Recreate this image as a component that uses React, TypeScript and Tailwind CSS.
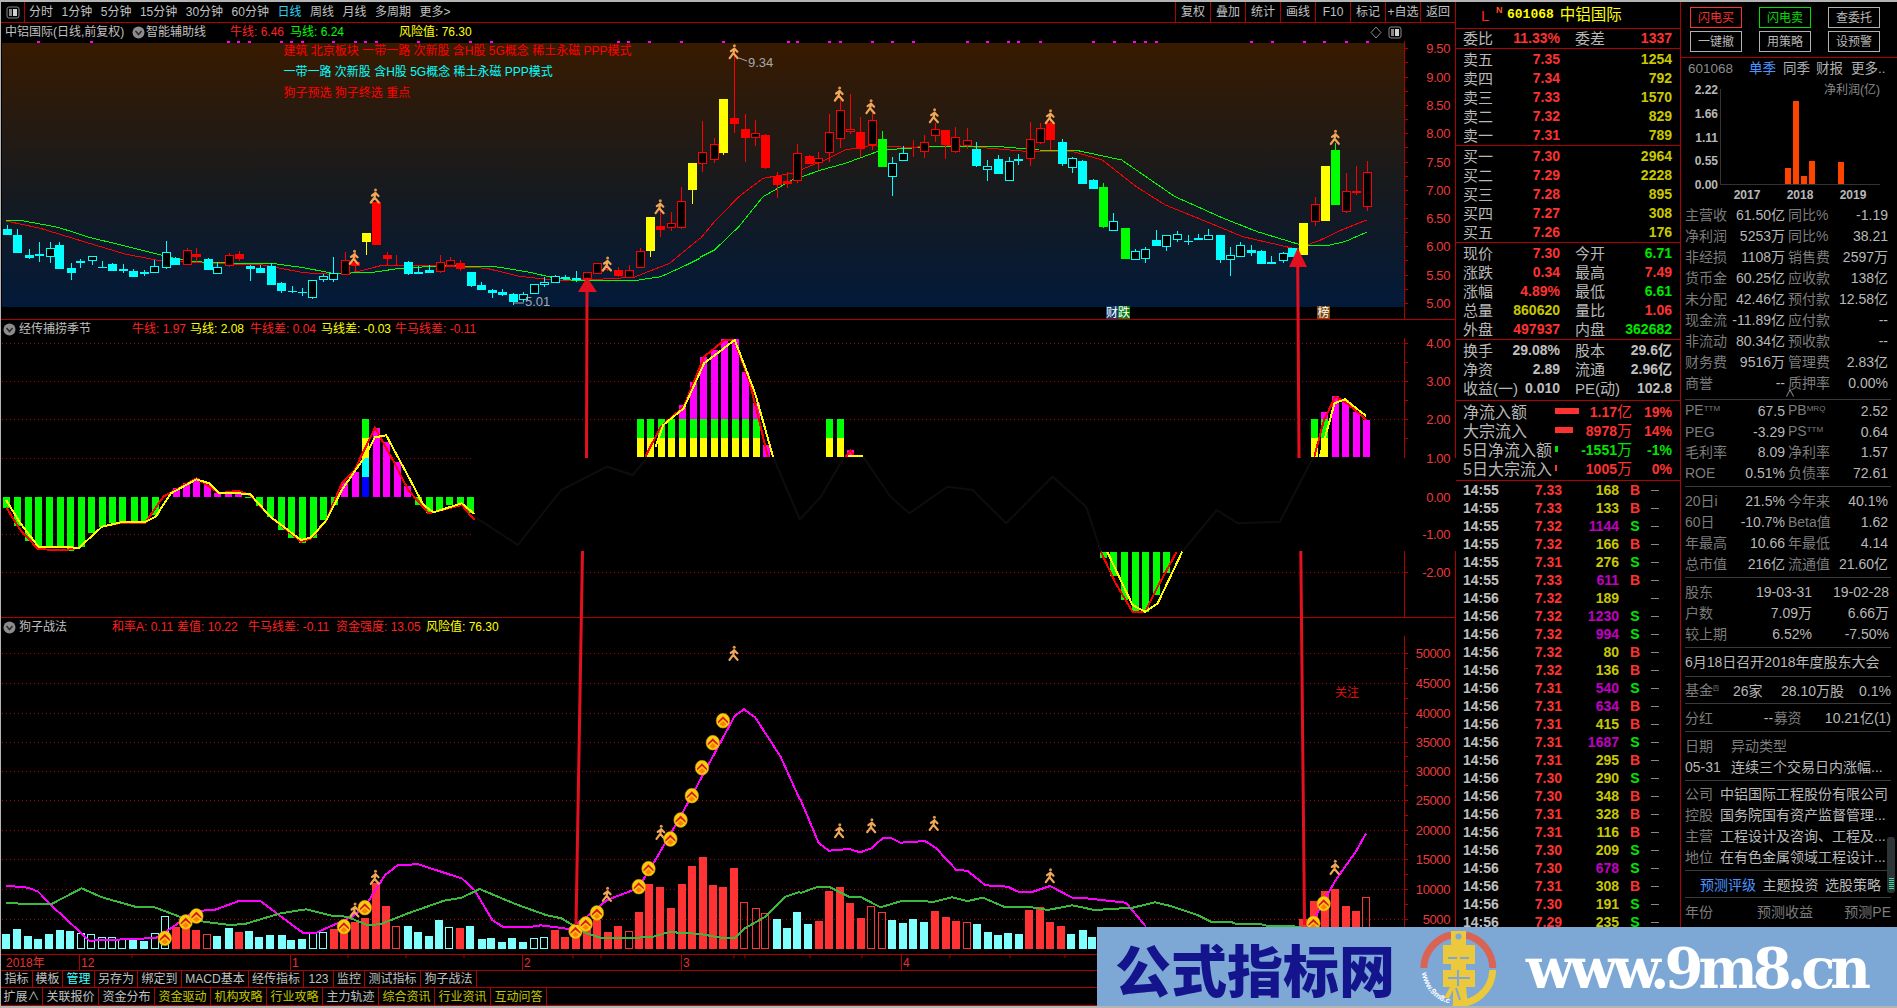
import React from 'react'

type Pt = number[]
const poly = (a: Pt[], sx: number, ox: number, oy: number) =>
  a.map(([x, y]) => `${(x / sx + ox).toFixed(1)},${(y / 3 + oy).toFixed(1)}`).join(' ')

// candles: kind, x, wick top, body top, body bottom, wick bottom (crop coordinates)
type Candle = [string, number, number, number, number, number]
const candlesA: Candle[] = [
  ['c',16,675,687,705,705],['c',39,687,705,758,758],['c',64,747,765,775,778],['c',87,725,762,767,785],['C',111,725,745,767,790],
  ['c',133,725,735,806,806],['c',158,790,804,818,840],['c',180,778,783,788,803],['C',205,769,769,781,795],['c',228,783,800,802,803],
  ['c',252,790,792,812,812],['c',275,793,806,812,820],['c',299,808,813,830,830],['c',322,810,816,821,828],['C',346,780,799,815,815],
  ['C',371,724,757,800,808],['c',393,770,775,795,795],['R',418,745,751,793,795],['r',440,743,762,771,790],['c',465,773,778,809,809],
  ['C',487,787,801,820,820],['R',512,760,766,796,800],['r',535,753,762,777,782],['c',559,795,798,806,842],['c',582,795,805,818,818],
  ['c',606,790,798,855,855],['c',630,845,849,873,878],['c',653,858,873,875,880],['c',677,865,875,878,887],['C',700,840,841,890,896],
  ['C',724,822,828,838,845],['C',747,771,820,838,845],['R',772,755,781,823,825],['r',795,755,785,797,812],['y',819,699,699,725,765],
  ['r',842,605,605,735,735],['r',866,757,765,777,797],['r',888,765,795,797,797],['c',913,782,786,822,826],['c',937,798,816,821,821],
  ['c',960,795,809,818,818],['R',985,765,787,812,818],['R',1007,770,781,796,798],['r',1031,780,790,806,812],['c',1054,816,816,858,860],
  ['c',1078,846,855,870,870],['c',1101,868,870,878,895],['c',1125,868,877,885,888],['c',1148,880,882,905,915],['C',1172,877,883,896,905],
  ['C',1197,853,853,880,880],['C',1219,832,845,853,860],['C',1244,825,829,845,850],['c',1266,826,831,837,840],['c',1290,813,834,841,845],
  ['R',1314,815,815,833,833],['R',1338,790,790,820,822],['r',1360,800,806,811,813],['r',1385,802,810,827,830],['R',1408,795,809,830,835],
  ['R',1433,745,754,800,805],['y',1455,650,650,752,770],['r',1479,625,678,690,710],['R',1503,637,670,682,692],['R',1526,560,604,680,686],
  ['y',1551,490,490,570,612],
]
const candlesB: Candle[] = [
  ['R',5,363,455,490,515],['R',28,413,433,478,490],['y',48,297,297,458,465],['r',71,145,354,371,400],['r',92,342,388,413,485],
  ['R',114,360,398,412,438],['r',135,403,405,503,507],['r',158,515,528,555,595],['r',180,515,543,552,565],['R',201,432,460,541,548],
  ['r',224,465,468,491,493],['R',244,455,473,487,510],['R',266,343,397,457,485],['R',288,300,331,415,445],['R',310,282,388,394,402],
  ['r',331,350,397,448,470],['R',354,340,361,433,450],['g',375,393,417,500,500],['C',397,472,490,529,588],['C',418,438,460,479,482],
  ['r',440,420,440,443,472],['R',463,405,425,452,473],['R',484,370,388,406,425],['r',506,390,390,435,477],['R',527,380,412,452,460],
  ['R',550,385,421,435,447],['c',570,427,447,497,500],['C',592,480,497,508,543],['c',614,465,477,522,522],['C',637,472,482,539,539],
  ['c',657,463,477,482,495],['R',680,365,416,475,497],['R',702,370,385,425,433],['r',723,340,370,420,450],['c',746,418,426,492,497],
  ['C',767,470,475,500,518],['c',789,480,483,551,551],['c',810,537,540,567,567],['g',832,548,561,681,683],['C',853,640,664,689,689],
  ['g',876,684,684,776,776],['C',897,748,754,776,780],['C',919,742,748,773,790],['c',940,690,721,738,738],['C',962,705,706,737,752],
  ['C',985,693,703,716,725],['c',1006,705,723,726,735],['c',1028,703,714,720,720],['C',1049,687,704,716,716],['c',1072,706,706,779,790],
  ['C',1093,740,766,776,828],['C',1115,725,736,767,767],['c',1136,735,751,760,767],['c',1158,750,753,791,791],['c',1179,768,787,791,791],
  ['C',1202,755,760,779,790],['c',1222,745,745,770,770],['y',1245,669,669,765,765],['R',1268,590,613,662,678],['y',1289,498,498,663,663],
  ['g',1311,430,450,615,615],['R',1332,518,574,632,640],['R',1354,497,574,576,585],['R',1375,483,517,617,633],
]
const candleColor: Record<string, string> = { c: '#00ffff', C: '#00ffff', r: '#ff0000', R: '#ff0000', y: '#ffff00', g: '#00ff00' }

function Candles({ data, sx, ox }: { data: Candle[]; sx: number; ox: number }) {
  return (
    <>
      {data.map(([k, x, wt, t, b, wb], i) => {
        const cx = Math.round(x / sx + ox)
        const col = candleColor[k]
        const hollow = k === 'C' || k === 'R'
        const top = Math.round(t / 3)
        const h = Math.max(Math.round(b / 3) - top, 1)
        return (
          <g key={i} shapeRendering="crispEdges">
            <line x1={cx + 0.5} x2={cx + 0.5} y1={wt / 3} y2={wb / 3} stroke={col} />
            <rect x={cx - 4 + (hollow ? 0.5 : 0)} y={top + (hollow ? 0.5 : 0)} width={hollow ? 8 : 9} height={h} fill={hollow ? '#000' : col} stroke={hollow ? col : 'none'} />
          </g>
        )
      })}
    </>
  )
}

function Runner({ x, y }: { x: number; y: number }) {
  return (
    <g transform={`translate(${x.toFixed(1)} ${y.toFixed(1)})`} fill="none" stroke="#f0a858" strokeWidth="2.2" strokeLinecap="round" strokeLinejoin="round">
      <circle cx="0.5" cy="-6" r="1.5" fill="#e09848" stroke="none" />
      <path d="M0.5 -3.2 L-0.5 1.5 L-4.2 6.5 M-0.5 1.5 L3.8 6.5 M-3 -0.5 L0.5 -3 L3.5 0" />
    </g>
  )
}

function Coin({ x, y }: { x: number; y: number }) {
  return (
    <g transform={`translate(${x.toFixed(1)} ${y.toFixed(1)})`}>
      <ellipse rx="6.8" ry="7.4" fill="#f8cc10" stroke="#c88a00" strokeWidth="0.5" />
      <path d="M-5 0.8 L0 -4.5 L5 0.8 L5 2.8 L0 -1.6 L-5 2.8 Z" fill="#d81818" />
      <path d="M-3.4 3.6 L0 0.2 L3.4 3.6 L0 6 Z" fill="#ff8000" />
    </g>
  )
}

function Grid({ ys, x2 = 1404 }: { ys: number[]; x2?: number }) {
  return (
    <g stroke="#b00000" strokeDasharray="1 3" shapeRendering="crispEdges">
      {ys.map(y => <line key={y} x1={2} x2={x2} y1={y + 0.5} y2={y + 0.5} />)}
    </g>
  )
}

function Axis({ labels, y1, y2, ticks }: { labels: [string, number][]; y1: number; y2: number; ticks: number[] }) {
  return (
    <g>
      <line x1="1404.5" x2="1404.5" y1={y1} y2={y2} stroke="#b00000" shapeRendering="crispEdges" />
      {ticks.map(t => <line key={t} x1={1404} x2={1408} y1={t + 0.5} y2={t + 0.5} stroke="#b00000" shapeRendering="crispEdges" />)}
      {labels.map(([s, y]) => (
        <text key={s} x="1450" y={y + 5} textAnchor="end" fontSize="13" letterSpacing="-0.4" fill="#e83c3c" fontFamily="Liberation Sans">{s}</text>
      ))}
    </g>
  )
}

const dots = [
  ...[84,202,509,532,556,628,650,675,744,793,816,840,935,1051,1098,1383,1405,1452,1524].map(d => d / 2.24),
  ...[46,179,199,265,286,352,395,438,548,591,634,654,700,808,851,894,916,938,1134,1177,1243,1286,1330,1373].map(d => d / 2.063 + 700),
]
const priceRunners = [
  ...[[840,588],[793,772],[1360,792],[1478,620]].map(([x, y]) => [x / 2.24, y / 3]),
  ...[[70,155],[287,282],[352,320],[483,347],[722,350],[1310,412]].map(([x, y]) => [x / 2.063 + 700, y / 3]),
]

function PriceChart() {
  const red1: Pt[] = [[14,663],[90,685],[200,730],[280,762],[350,780],[410,785],[520,792],[590,795],[680,818],[745,823],[800,815],[850,798],[980,797],[1090,805],[1160,828],[1250,842],[1340,838],[1420,832],[1500,790],[1568,715]]
  const green1: Pt[] = [[14,661],[50,662],[130,682],[200,712],[280,738],[370,768],[400,778],[430,785],[520,789],[615,791],[680,803],[745,820],[830,818],[890,806],[990,797],[1110,800],[1180,815],[1240,833],[1290,842],[1420,842],[1480,830],[1530,800],[1568,775]]
  const red2: Pt[] = [[0,717],[30,665],[80,590],[130,535],[190,520],[250,485],[300,450],[350,437],[430,442],[530,437],[600,445],[680,455],[770,455],[830,480],[900,560],[960,615],[1040,662],[1120,710],[1230,747],[1280,720],[1320,692],[1375,660]]
  const green2: Pt[] = [[0,772],[30,750],[80,680],[130,590],[190,540],[250,510],[300,490],[375,450],[480,440],[620,440],[700,450],[780,452],[870,480],[980,590],[1080,655],[1150,695],[1240,735],[1290,738],[1330,725],[1375,697]]
  return (
    <svg className="block w-[1454px] h-[278px]" viewBox="1 41 1454 278">
      <defs>
        <linearGradient id="sky" x1="0" y1="0" x2="0" y2="1">
          <stop offset="0" stopColor="#381a00" />
          <stop offset="0.55" stopColor="#171a1e" />
          <stop offset="1" stopColor="#021a3a" />
        </linearGradient>
      </defs>
      <rect x="2" y="43" width="1402" height="264" fill="url(#sky)" />
      {dots.map((x, i) => <rect key={i} x={Math.round(x)} y="40" width="3" height="3" fill="#ff00ff" />)}
      <g fontSize="12" fontFamily="Liberation Sans, Noto Sans CJK SC, sans-serif">
        <text x="283.5" y="55" fill="#ff0000">建筑 北京板块 一带一路 次新股 含H股 5G概念 稀土永磁 PPP模式</text>
        <text x="283.5" y="76" fill="#00ffff">一带一路 次新股 含H股 5G概念 稀土永磁 PPP模式</text>
        <text x="283.5" y="97" fill="#ff0000">狗子预选 狗子终选 重点</text>
      </g>
      <g fill="none" shapeRendering="crispEdges">
        <polyline points={poly(red1, 2.24, 0, 0)} stroke="#ff0000" />
        <polyline points={poly(green1, 2.24, 0, 0)} stroke="#00ff00" />
        <polyline points={poly(red2, 2.063, 700, 0)} stroke="#ff0000" />
        <polyline points={poly(green2, 2.063, 700, 0)} stroke="#00ff00" />
      </g>
      <Candles data={candlesA} sx={2.24} ox={0} />
      <Candles data={candlesB} sx={2.063} ox={700} />
      {priceRunners.map(([x, y], i) => <Runner key={i} x={x} y={y} />)}
      <g fontSize="13" fontFamily="Liberation Sans" fill="#a8a8a8">
        <line x1="739" y1="58" x2="747" y2="61" stroke="#a8a8a8" />
        <text x="748" y="67">9.34</text>
        <line x1="513" y1="303" x2="524" y2="303" stroke="#a8a8a8" />
        <text x="525" y="306">5.01</text>
      </g>
      <g fontSize="12" fontFamily="Noto Sans CJK SC" fill="#fff">
        <rect x="1106" y="306" width="12" height="13" fill="#12396a" />
        <rect x="1118" y="306" width="12" height="13" fill="#0a7a14" />
        <text x="1106" y="317">财</text>
        <text x="1118" y="317">跌</text>
        <rect x="1317" y="306" width="13" height="13" fill="#7a4a10" />
        <text x="1317.5" y="317">榜</text>
      </g>
      <Axis
        y1={41}
        y2={319}
        labels={[['9.50',48],['9.00',77],['8.50',105],['8.00',133],['7.50',162],['7.00',190],['6.50',218],['6.00',246],['5.50',275],['5.00',303]]}
        ticks={[48,62,77,91,105,119,133,147,162,176,190,204,218,232,246,260,275,289,303]}
      />
    </svg>
  )
}

// histogram in the middle pane: bars are [x, top, bottom] in crop coordinates
const greenA: number[][] = [[12,530,563],[33,530,617],[54,530,663],[75,530,685],[96,530,680],[117,530,680],[138,530,693],[158,530,680],[179,530,640],[200,530,622],[220,530,610],[240,530,607],[262,530,607],[283,530,607],[304,530,585],[487,530,535],[508,530,558],[530,530,590],[550,530,630],[570,530,655],[592,530,668],[613,530,655],[634,530,600],[654,530,555],[819,530,555],[840,530,580],[861,530,570],[881,530,555],[902,530,555],[922,530,580]]
const magentaA: number[][] = [[345,505,530],[365,490,530],[385,478,530],[405,495,530],[425,520,530],[446,520,530],[467,512,530],[675,485,530],[695,455,530],[736,323,530],[757,365,530],[778,425,530],[798,497,530]]
const stackA = [1254,1274,1295,1316,1337,1358,1378,1399,1420,1440,1461,1482]
const magentaTop: number[][] = [[1337,255,298],[1358,185,298],[1378,110,298],[1399,90,298],[1420,58,298],[1440,58,298],[1461,155,298],[1482,250,298],[1502,375,410]]

function Bar({ x, t, b, c, sx, ox, w = 7 }: { x: number; t: number; b: number; c: string; sx: number; ox: number; w?: number }) {
  const cx = Math.round(x / sx + ox)
  const top = Math.round(t / 3 + 320)
  return <rect x={cx - 3} y={top} width={w} height={Math.max(Math.round(b / 3 + 320) - top, 1)} fill={c} shapeRendering="crispEdges" />
}

function SeasonChart() {
  const p5 = (a: Pt[]) => poly(a, 1.96, 0, 320)
  const p6 = (a: Pt[]) => poly(a, 2.376, 800, 320)
  return (
    <svg className="block w-[1454px] h-[279px]" viewBox="1 338 1454 279">
      <Grid ys={[343, 381, 419, 572]} />
      <Grid ys={[458, 534]} x2={474} />
      {/* what is left of the curves under the black band */}
      <g fill="none" stroke="#0d0d0d" strokeWidth="2">
        <polyline points={p5([[930,590],[1015,675],[1100,510],[1190,440],[1240,465],[1270,410]])} />
        <polyline points={p5([[1515,410],[1568,600]])} />
        <polyline points={p6([[0,598],[50,530],[105,410],[150,410],[215,530],[260,580],[350,500],[410,510],[490,610],[600,470],[680,560],[715,695]])} />
        <polyline points={p6([[908,695],[990,570],[1040,610],[1140,605],[1220,410]])} />
      </g>
      {greenA.map(([x, t, b]) => <Bar key={x} x={x} t={t} b={b} c="#00ff00" sx={1.96} ox={0} />)}
      {magentaA.map(([x, t, b]) => <Bar key={x} x={x} t={t} b={b} c="#ff00ff" sx={1.96} ox={0} />)}
      <Bar x={716} t={298} b={353} c="#00ff00" sx={1.96} ox={0} />
      <Bar x={716} t={353} b={413} c="#ffff00" sx={1.96} ox={0} />
      <Bar x={716} t={413} b={470} c="#00ffff" sx={1.96} ox={0} />
      <Bar x={716} t={470} b={530} c="#0000ff" sx={1.96} ox={0} />
      {stackA.map(x => (
        <g key={x}>
          <Bar x={x} t={298} b={353} c="#00ff00" sx={1.96} ox={0} />
          <Bar x={x} t={353} b={410} c="#ffff00" sx={1.96} ox={0} />
        </g>
      ))}
      {magentaTop.map(([x, t, b]) => <Bar key={x} x={x} t={t} b={b} c="#ff00ff" sx={1.96} ox={0} />)}
      {[70, 94].map(x => (
        <g key={x}>
          <Bar x={x} t={298} b={353} c="#00ff00" sx={2.376} ox={800} />
          <Bar x={x} t={353} b={410} c="#ffff00" sx={2.376} ox={800} />
        </g>
      ))}
      <Bar x={118} t={390} b={410} c="#ff00ff" sx={2.376} ox={800} />
      {[[720,715],[744,768],[770,840],[795,878],[820,875],[845,825],[870,760]].map(([x, b]) => (
        <Bar key={x} x={x} t={695} b={b} c="#00ff00" sx={2.376} ox={800} />
      ))}
      {[1222, 1245].map(x => (
        <g key={x}>
          <Bar x={x} t={298} b={353} c="#00ff00" sx={2.376} ox={800} />
          <Bar x={x} t={353} b={410} c="#ffff00" sx={2.376} ox={800} />
        </g>
      ))}
      <Bar x={1245} t={275} b={298} c="#ff00ff" sx={2.376} ox={800} />
      {[[1272,228],[1296,240],[1322,275],[1346,300]].map(([x, t]) => <Bar key={x} x={x} t={t} b={410} c="#ff00ff" sx={2.376} ox={800} />)}

      <g fill="none" strokeWidth="2" shapeRendering="crispEdges">
        <polyline stroke="#ff0000" points={p5([[12,562],[40,630],[75,688],[130,690],[155,683],[200,620],[240,608],[285,608],[320,530],[385,475],[430,520],[465,512],[490,525],[530,590],[590,665],[610,655],[640,600],[670,490],[695,450],[735,323],[770,420],[800,510],[840,580],[905,555],[930,600]])} />
        <polyline stroke="#ffff00" points={p5([[12,540],[40,610],[75,680],[130,682],[155,683],[200,620],[240,606],[285,605],[305,590],[335,520],[385,478],[410,490],[430,520],[465,520],[490,522],[530,590],[590,660],[610,652],[640,600],[670,510],[715,410],[735,352],[757,346],[790,440],[830,555],[850,577],[905,550],[930,582]])} />
        <polyline stroke="#ff0000" points={p5([[1265,410],[1295,320],[1340,260],[1380,110],[1420,60],[1440,62],[1470,190],[1505,410]])} />
        <polyline stroke="#ffff00" points={p5([[1285,380],[1300,315],[1340,265],[1380,130],[1440,60],[1480,220],[1515,410]])} />
        <polyline stroke="#ff0000" points={p6([[108,410],[120,392],[130,410]])} />
        <polyline stroke="#ffff00" points={p6([[115,408],[150,408]])} />
        <polyline stroke="#ff0000" points={p6([[715,695],[750,790],[790,875],[820,875],[850,800],[895,695]])} />
        <polyline stroke="#ffff00" points={p6([[730,695],[790,855],[820,875],[850,850],[908,695]])} />
        <polyline stroke="#ff0000" points={p6([[1222,410],[1245,300],[1272,230],[1300,250],[1346,300]])} />
        <polyline stroke="#ffff00" points={p6([[1235,410],[1270,250],[1295,238],[1345,288]])} />
      </g>
      <Axis
        y1={338}
        y2={458}
        labels={[['4.00',343],['3.00',381],['2.00',419],['1.00',458],['0.00',497],['-1.00',534],['-2.00',572]]}
        ticks={[343,362,381,400,419,438]}
      />
      <line x1="1404.5" x2="1404.5" y1="551" y2="617" stroke="#b00000" shapeRendering="crispEdges" />
      <line x1="1404" x2="1408" y1="572.5" y2="572.5" stroke="#b00000" shapeRendering="crispEdges" />
    </svg>
  )
}

type VolBar = [number, number, string]
const volA: VolBar[] = [
  [12,912,'c'],[33,897,'c'],[55,918,'c'],[75,927,'c'],[96,912,'c'],[117,900,'c'],[137,903,'c'],[158,908,'C'],[179,912,'C'],[199,922,'C'],[220,922,'C'],[240,928,'C'],[261,930,'c'],[282,933,'c'],[303,910,'C'],[324,858,'C'],
  [344,890,'r'],[365,895,'r'],[385,900,'r'],[406,913,'R'],[426,918,'c'],[448,893,'c'],[468,905,'r'],[489,903,'c'],[508,922,'c'],[529,915,'c'],[552,915,'c'],[571,930,'c'],[592,927,'c'],[613,908,'C'],[634,907,'C'],
  [654,897,'r'],[675,910,'r'],[695,877,'r'],[716,865,'r'],[736,760,'r'],[757,828,'r'],[777,888,'R'],[799,888,'c'],[820,906,'c'],[840,918,'c'],[861,870,'c'],[881,892,'C'],[902,894,'r'],[922,888,'c'],[944,928,'c'],[963,925,'c'],[984,937,'c'],[1004,925,'c'],[1026,937,'c'],[1047,925,'C'],[1067,920,'C'],
  [1088,900,'r'],[1108,920,'r'],[1129,905,'r'],[1150,890,'r'],[1170,870,'r'],[1191,907,'r'],[1212,888,'r'],[1232,902,'R'],[1253,846,'r'],[1273,762,'r'],[1294,772,'r'],[1316,835,'r'],[1336,762,'r'],[1357,708,'r'],[1377,682,'r'],[1398,765,'r'],[1418,772,'r'],[1439,715,'r'],[1459,815,'R'],[1481,835,'R'],[1500,850,'R'],[1522,868,'c'],[1543,895,'c'],[1562,847,'c'],
]
const volB: VolBar[] = [
  [18,882,'c'],[42,873,'r'],[66,783,'r'],[89,771,'r'],[113,820,'r'],[136,865,'r'],[160,827,'R'],[183,845,'R'],[207,870,'c'],[230,880,'c'],[254,868,'c'],[278,877,'c'],[302,843,'r'],[326,860,'r'],[349,873,'r'],[373,877,'R'],[396,883,'c'],[420,907,'c'],[443,915,'c'],[467,909,'c'],[490,912,'c'],[514,840,'r'],[538,832,'r'],[561,877,'r'],[585,888,'r'],[608,912,'c'],[633,900,'c'],[655,920,'c'],
  [1127,867,'r'],[1152,813,'r'],[1175,783,'r'],[1199,777,'r'],[1222,828,'r'],[1246,843,'r'],[1268,802,'R'],
]

function Vols({ data, sx, ox }: { data: VolBar[]; sx: number; ox: number }) {
  return (
    <>
      {data.map(([x, t, k], i) => {
        const cx = Math.round(x / sx + ox)
        const top = Math.round(t / 3 + 630)
        const col = k.toLowerCase() === 'c' ? '#80ffff' : '#ff3333'
        const hollow = k === 'C' || k === 'R'
        return hollow ? (
          <rect key={i} x={cx - 3.5} y={top + 0.5} width={7} height={949 - top - 1} fill="none" stroke={col} shapeRendering="crispEdges" />
        ) : (
          <rect key={i} x={cx - 4} y={top} width={8} height={949 - top} fill={col} shapeRendering="crispEdges" />
        )
      })}
    </>
  )
}

function DogChart() {
  const p7 = (a: Pt[]) => poly(a, 1.96, 0, 630)
  const p8 = (a: Pt[]) => poly(a, 2.24, 800, 630)
  const coins = [
    ...[[323,925],[364,876],[385,858],[674,890],[715,833],[1128,904],[1148,882],[1170,849],[1252,770],[1271,716],[1314,627],[1334,570],[1356,497],[1376,413],[1397,338],[1417,272]].map(([x, y]) => [x / 1.96, y / 3 + 630]),
    ...[[1150,880],[1173,821]].map(([x, y]) => [x / 2.24 + 800, y / 3 + 630]),
  ]
  const runners = [
    ...[[1438,70],[1295,607],[1190,793],[735,742],[695,840]].map(([x, y]) => [x / 1.96, y / 3 + 630]),
    ...[[88,602],[160,587],[300,580],[560,737],[1198,712]].map(([x, y]) => [x / 2.24 + 800, y / 3 + 630]),
  ]
  return (
    <svg className="block w-[1454px] h-[318px]" viewBox="1 636 1454 318">
      <Grid ys={[653, 683, 713, 742, 771, 800, 830, 859, 889, 919]} />
      <Vols data={volA} sx={1.96} ox={0} />
      <Vols data={volB} sx={2.24} ox={800} />
      <g fill="none" strokeWidth="2" shapeRendering="crispEdges">
        <polyline stroke="#ff00ff" points={p7([[12,767],[55,773],[75,785],[100,825],[175,932],[245,928],[305,924],[340,890],[380,843],[420,840],[470,812],[510,813],[595,910],[620,908],[690,860],[715,830],[755,735],[780,705],[820,703],[880,733],[905,745],[930,780],[965,870],[985,890],[1035,892],[1060,886],[1115,897],[1150,860],[1190,810],[1250,775],[1275,715],[1330,570],[1440,258],[1458,238],[1480,262],[1530,380],[1568,510]])} />
        <polyline stroke="#ff00ff" points={p8([[0,505],[42,640],[65,662],[110,657],[135,667],[160,655],[185,625],[205,625],[225,638],[280,633],[305,655],[350,720],[375,722],[415,766],[465,770],[490,786],[520,786],[560,768],[610,803],[640,805],[730,818],[750,850],[775,890]])} />
        <polyline stroke="#ff00ff" points={p8([[1150,870],[1200,750],[1245,665],[1268,610]])} />
        <polyline stroke="#3cb83c" points={p7([[12,818],[50,822],[100,823],[160,775],[200,802],[265,830],[300,830],[355,862],[400,875],[450,885],[480,882],[550,850],[600,838],[650,857],[680,860],[720,885],[745,883],[800,850],[870,812],[905,803],[940,777],[1010,822],[1070,855],[1100,865],[1150,910],[1180,925],[1230,925],[1280,920],[1310,907],[1340,908],[1375,913],[1420,925],[1440,925],[1460,895],[1500,860],[1540,800],[1568,785]])} />
        <polyline stroke="#3cb83c" points={p8([[0,790],[40,770],[65,770],[110,800],[135,800],[180,832],[230,812],[300,815],[340,802],[375,813],[410,803],[460,832],[520,832],[555,840],[610,826],[660,840],[745,833],[795,817],[830,828],[890,855],[920,875],[965,875],[975,881],[1030,882],[1045,887],[1125,890]])} />
      </g>
      {runners.map(([x, y], i) => <Runner key={i} x={x} y={y} />)}
      {coins.map(([x, y], i) => <Coin key={i} x={x} y={y} />)}
      <text x="1335" y="697" fontSize="12" fill="#e01010" fontFamily="Noto Sans CJK SC">关注</text>
      <Axis
        y1={636}
        y2={954}
        labels={[['50000',653],['45000',683],['40000',713],['35000',742],['30000',771],['25000',800],['20000',830],['15000',859],['10000',889],['5000',919]]}
        ticks={[653,668,683,698,713,727,742,756,771,785,800,815,830,844,859,874,889,904,919]}
      />
    </svg>
  )
}

function DateAxis() {
  return (
    <svg className="block w-[1454px] h-[15px]" viewBox="1 955 1454 15">
      {[132,348,406,464,573,601,734,745,810,862,950,1010,1065].map(x => <line key={x} x1={x} x2={x} y1="955" y2="958" stroke="#b00000" />)}
      {[79,290,522,681,901].map(x => <line key={x} x1={x + 0.5} x2={x + 0.5} y1="955" y2="970" stroke="#b00000" />)}
      <g fontSize="12" fill="#e83030" fontFamily="Liberation Sans, Noto Sans CJK SC, sans-serif">
        <text x="6" y="967">2018年</text>
        <text x="81" y="967">12</text>
        <text x="292" y="967">1</text>
        <text x="524" y="967">2</text>
        <text x="683" y="967">3</text>
        <text x="903" y="967">4</text>
      </g>
    </svg>
  )
}

function Toggle() {
  return (
    <svg className="block w-[14px] h-[13px]" viewBox="0 0 14 13">
      <rect x="1" y="1" width="12" height="11" rx="2" fill="none" stroke="#8a8a8a" />
      <rect x="3" y="3" width="3" height="7" fill="#8a8a8a" />
      <rect x="7" y="3" width="4" height="7" fill="#d0d0d0" />
    </svg>
  )
}

function Fold() {
  return (
    <svg className="block w-[13px] h-[13px]" viewBox="0 0 13 13">
      <circle cx="6.5" cy="6.5" r="6" fill="#8c8c8c" />
      <path d="M3.5 5 L6.5 8.5 L9.5 5" fill="none" stroke="#2a2a2a" strokeWidth="1.5" />
    </svg>
  )
}

const buttonsA = [
  ['指标', 'w-[32px]', 'text-[#c0c0c0]'], ['模板', 'w-[30px]', 'text-[#c0c0c0]'], ['管理', 'w-[32px]', 'text-[#40ffff]'],
  ['另存为', 'w-[43px]', 'text-[#c0c0c0]'], ['绑定到', 'w-[44px]', 'text-[#c0c0c0]'], ['MACD基本', 'w-[67px]', 'text-[#c0c0c0]'],
  ['经传指标', 'w-[55px]', 'text-[#c0c0c0]'], ['123', 'w-[30px]', 'text-[#c0c0c0]'], ['监控', 'w-[31px]', 'text-[#c0c0c0]'],
  ['测试指标', 'w-[56px]', 'text-[#c0c0c0]'], ['狗子战法', 'w-[56px]', 'text-[#c0c0c0]'],
]
const buttonsB = [
  ['扩展∧', 'w-[42px]', 'text-[#c0c0c0]'], ['关联报价', 'w-[56px]', 'text-[#c0c0c0]'], ['资金分布', 'w-[56px]', 'text-[#c0c0c0]'],
  ['资金驱动', 'w-[56px]', 'text-[#c8c800]'], ['机构攻略', 'w-[56px]', 'text-[#c8c800]'], ['行业攻略', 'w-[56px]', 'text-[#c8c800]'],
  ['主力轨迹', 'w-[56px]', 'text-[#c0c0c0]'], ['综合资讯', 'w-[56px]', 'text-[#c8c800]'], ['行业资讯', 'w-[56px]', 'text-[#c8c800]'],
  ['互动问答', 'w-[56px]', 'text-[#c8c800]'],
]

function ButtonRow({ items }: { items: string[][] }) {
  return (
    <>
      {items.map(([t, w, c]) => (
        <span key={t} className={`${w} ${c} shrink-0 h-full border-r border-[#b00000] flex items-center justify-center text-[12px]`}>{t}</span>
      ))}
    </>
  )
}

function LeftColumn() {
  return (
    <div className="w-[1455px] shrink-0 flex flex-col border-r border-[#b00000] text-[12px] leading-none">
      {/* top toolbar */}
      <div className="h-[21px] flex items-center border-b border-[#b00000] text-[#c0c0c0]">
        <div className="w-[24px] h-full border-r border-[#b00000] flex items-center justify-center"><Toggle /></div>
        <div className="flex items-center gap-[8.5px] pl-[4px]">
          <span>分时</span><span>1分钟</span><span>5分钟</span><span>15分钟</span><span>30分钟</span><span>60分钟</span>
          <span className="text-[#30d0f0]">日线</span><span>周线</span><span>月线</span><span>多周期</span><span>更多&gt;</span>
        </div>
        <div className="ml-auto flex h-full">
          {['复权', '叠加', '统计', '画线', 'F10', '标记', '+自选', '返回'].map(t => (
            <span key={t} className="w-[35px] border-l border-[#b00000] flex items-center justify-center">{t}</span>
          ))}
        </div>
      </div>

      {/* price pane */}
      <div className="border-b border-[#b00000]">
        <div className="h-[18px] flex items-center pl-[4px] relative">
          <span className="w-[127px] text-[#c0c0c0]">中铝国际(日线,前复权)</span>
          <span className="w-[13px]"><Fold /></span>
          <span className="w-[85px] text-[#c0c0c0] pl-[1px]">智能辅助线</span>
          <span className="w-[60px] text-[#ff2020]">牛线: 6.46</span>
          <span className="w-[109px] text-[#00ff00]">马线: 6.24</span>
          <span className="text-[#ffff00]">风险值: 76.30</span>
          <svg className="absolute left-[1369px] top-[3px] w-[12px] h-[13px]" viewBox="0 0 12 13">
            <path d="M6 1 L11 6.5 L6 12 L1 6.5 Z" fill="none" stroke="#8a8a8a" />
          </svg>
          <span className="absolute left-[1387px] top-[3px]"><Toggle /></span>
        </div>
        <PriceChart />
      </div>

      {/* season pane */}
      <div className="border-b border-[#b00000]">
        <div className="h-[18px] flex items-center pl-[2px]">
          <span className="w-[16px]"><Fold /></span>
          <span className="w-[113px] text-[#c0c0c0]">经传捕捞季节</span>
          <span className="w-[58px] text-[#ff2020]">牛线: 1.97</span>
          <span className="w-[60px] text-[#ffff00]">马线: 2.08</span>
          <span className="w-[71px] text-[#ff2020]">牛线差: 0.04</span>
          <span className="w-[74px] text-[#ffff00]">马线差: -0.03</span>
          <span className="text-[#ff2020]">牛马线差: -0.11</span>
        </div>
        <SeasonChart />
      </div>

      {/* dog pane */}
      <div className="h-[18px] flex items-center pl-[2px]">
        <span className="w-[16px]"><Fold /></span>
        <span className="w-[93px] text-[#c0c0c0]">狗子战法</span>
        <span className="w-[65px] text-[#ff2020]">和率A: 0.11</span>
        <span className="w-[71px] text-[#ff2020]">差值: 10.22</span>
        <span className="w-[88px] text-[#ff2020]">牛马线差: -0.11</span>
        <span className="w-[90px] text-[#ff2020]">资金强度: 13.05</span>
        <span className="text-[#ffff00]">风险值: 76.30</span>
      </div>
      <DogChart />
      <div className="h-[16px] border-t border-[#b00000]"><DateAxis /></div>
      <div className="h-[17px] border-t border-[#b00000] flex"><ButtonRow items={buttonsA} /></div>
      <div className="h-[19px] border-y border-[#b00000] flex"><ButtonRow items={buttonsB} /></div>
    </div>
  )
}

const red = 'text-[#ff3232]'
const yel = 'text-[#c8c800]'
const grn = 'text-[#00e600]'
const gry = 'text-[#c0c0c0]'
const mag = 'text-[#c000c0]'

function QuoteRow({ a, v1, c1, b, v2, c2 }: { a: string; v1: string; c1: string; b?: string; v2: string; c2: string }) {
  return (
    <div className="grid grid-cols-[40px_57px_55px_57px] h-[19px] pl-[7px] items-center leading-[19px]">
      <span className="text-[15px] text-[#b8b8b8] whitespace-nowrap">{a}</span>
      <span className={`text-right font-bold text-[14px] ${c1}`}>{v1}</span>
      <span className="pl-[15px] text-[15px] text-[#b8b8b8] whitespace-nowrap">{b}</span>
      <span className={`text-right font-bold text-[14px] whitespace-nowrap ${c2}`}>{v2}</span>
    </div>
  )
}

function Flow({ name, bar, barCls, amount, unit, pct, c }: { name: string; bar?: string; barCls: string; amount: string; unit: string; pct: string; c: string }) {
  return (
    <div className="grid grid-cols-[92px_77px_40px] h-[19px] pl-[7px] items-center leading-[19px]">
      <span className="text-[16px] text-[#b8b8b8] whitespace-nowrap">{name}</span>
      <span className="relative text-right">
        <i className={`absolute left-0 top-[6px] h-[6px] ${barCls} ${bar}`} />
        <span className={`font-bold text-[14px] ${c}`}>{amount}<span className="text-[15px] font-normal">{unit}</span></span>
      </span>
      <span className={`text-right font-bold text-[14px] ${c}`}>{pct}</span>
    </div>
  )
}

const ticks: [string, string, string, string, string][] = [
  ['14:55','7.33','168',yel,'B'],['14:55','7.33','133',yel,'B'],['14:55','7.32','1144',mag,'S'],['14:55','7.32','166',yel,'B'],['14:55','7.31','276',yel,'S'],['14:55','7.33','611',mag,'B'],
  ['14:56','7.32','189',yel,''],['14:56','7.32','1230',mag,'S'],['14:56','7.32','994',mag,'S'],['14:56','7.32','80',yel,'B'],['14:56','7.32','136',yel,'B'],['14:56','7.31','540',mag,'S'],
  ['14:56','7.31','634',mag,'B'],['14:56','7.31','415',yel,'B'],['14:56','7.31','1687',mag,'S'],['14:56','7.31','295',yel,'B'],['14:56','7.30','290',yel,'S'],['14:56','7.30','348',yel,'B'],
  ['14:56','7.31','328',yel,'B'],['14:56','7.31','116',yel,'B'],['14:56','7.30','209',yel,'S'],['14:56','7.30','678',mag,'S'],['14:56','7.31','308',yel,'B'],['14:56','7.30','191',yel,'S'],['14:56','7.29','235',yel,'S'],
]

function QuotePanel() {
  const level = (name: string, p: string, v: string) => <QuoteRow key={name} a={name} v1={p} c1={red} v2={v} c2={yel} />
  return (
    <div className="w-[225px] shrink-0 border-r border-[#b00000] flex flex-col overflow-hidden">
      <div className="h-[27px] border-b border-[#b00000] flex items-center relative">
        <span className="absolute left-[25px] top-[6px] text-[15px] text-[#ff2020] leading-none">L</span>
        <span className="absolute left-[40px] top-[4px] text-[9px] font-bold text-[#ff5a20] leading-none">N</span>
        <span className="pl-[51px] font-bold text-[13px] text-[#ffff00] font-['Liberation_Mono',monospace]">601068</span>
        <span className="pl-[6px] text-[15.5px] text-[#ffff00]">中铝国际</span>
      </div>
      <div className="h-[20px] border-b border-[#b00000]">
        <QuoteRow a="委比" v1="11.33%" c1={red} b="委差" v2="1337" c2={red} />
      </div>
      <div className="h-[97px] pt-[1px] border-b border-[#b00000]">
        {level('卖五', '7.35', '1254')}{level('卖四', '7.34', '792')}{level('卖三', '7.33', '1570')}{level('卖二', '7.32', '829')}{level('卖一', '7.31', '789')}
      </div>
      <div className="h-[97px] pt-[1px] border-b border-[#b00000]">
        {level('买一', '7.30', '2964')}{level('买二', '7.29', '2228')}{level('买三', '7.28', '895')}{level('买四', '7.27', '308')}{level('买五', '7.26', '176')}
      </div>
      <div className="h-[97px] pt-[1px] border-b border-[#b00000]">
        <QuoteRow a="现价" v1="7.30" c1={red} b="今开" v2="6.71" c2={grn} />
        <QuoteRow a="涨跌" v1="0.34" c1={red} b="最高" v2="7.49" c2={red} />
        <QuoteRow a="涨幅" v1="4.89%" c1={red} b="最低" v2="6.61" c2={grn} />
        <QuoteRow a="总量" v1="860620" c1={yel} b="量比" v2="1.06" c2={red} />
        <QuoteRow a="外盘" v1="497937" c1={red} b="内盘" v2="362682" c2={grn} />
      </div>
      <div className="h-[61px] pt-[1px] border-b border-[#b00000]">
        <QuoteRow a="换手" v1="29.08%" c1={gry} b="股本" v2="29.6亿" c2={gry} />
        <QuoteRow a="净资" v1="2.89" c1={gry} b="流通" v2="2.96亿" c2={gry} />
        <QuoteRow a="收益(一)" v1="0.010" c1={gry} b="PE(动)" v2="102.8" c2={gry} />
      </div>
      <div className="h-[80px] pt-[1px] border-b border-[#b00000]">
        <Flow name="净流入额" barCls="bg-[#ff3232]" bar="w-[24px]" amount="1.17" unit="亿" pct="19%" c={red} />
        <Flow name="大宗流入" barCls="bg-[#ff3232]" bar="w-[18px]" amount="8978" unit="万" pct="14%" c={red} />
        <Flow name="5日净流入额" barCls="bg-[#00e600]" bar="w-[3px]" amount="-1551" unit="万" pct="-1%" c={grn} />
        <Flow name="5日大宗流入" barCls="bg-[#ff3232]" bar="w-[2px]" amount="1005" unit="万" pct="0%" c={red} />
      </div>
      <div className="flex flex-col">
        {ticks.map(([t, p, v, c, s], i) => (
          <div key={i} className="grid grid-cols-[50px_49px_57px_32px_20px] h-[18px] pl-[7px] items-center font-bold text-[14px] leading-[18px]">
            <span className={gry}>{t}</span>
            <span className={`text-right ${red}`}>{p}</span>
            <span className={`text-right ${c}`}>{v}</span>
            <span className={`text-center ${s === 'B' ? red : grn}`}>{s}</span>
            <i className="block w-[8px] h-[1px] bg-[#8a8a8a]" />
          </div>
        ))}
      </div>
    </div>
  )
}

function Pair({ a, v, sup }: { a: string; v: string; sup?: string }) {
  return (
    <div className="flex justify-between items-center whitespace-nowrap">
      <span className="text-[#7c7c7c]">{a}{sup && <span className="text-[8px] relative -top-[4px]">{sup}</span>}</span>
      <span className="text-[#b8b8b8]">{v}</span>
    </div>
  )
}

function FinRow({ a, v, b, w, supA, supB }: { a: string; v: string; b: string; w: string; supA?: string; supB?: string }) {
  return (
    <div className="grid grid-cols-[100px_100px] gap-x-[3px] h-[21px] items-center leading-[21px]">
      <Pair a={a} v={v} sup={supA} />
      <Pair a={b} v={w} sup={supB} />
    </div>
  )
}

function Info({ a, v }: { a: string; v: string }) {
  return (
    <div className="flex h-[21px] items-center leading-[21px] whitespace-nowrap">
      <span className="w-[35px] text-[#7c7c7c]">{a}</span>
      <span className="text-[#b8b8b8]">{v}</span>
    </div>
  )
}

function MiniChart() {
  return (
    <svg className="block w-[216px] h-[125px]" viewBox="1681 80 216 125" fontFamily="Liberation Sans, Noto Sans CJK SC, sans-serif">
      <line x1="1720.5" x2="1720.5" y1="89" y2="184" stroke="#333" />
      <line x1="1720" x2="1880" y1="184.5" y2="184.5" stroke="#333" />
      {[[1785,168],[1793,101],[1801,176],[1809,161],[1838,162]].map(([x, t]) => (
        <rect key={x} x={x} y={t} width="6" height={184 - t} fill="#ff4400" />
      ))}
      <g fontSize="12" fontWeight="bold" fill="#b8b8b8" textAnchor="end">
        {[['2.22',90],['1.66',114],['1.11',138],['0.55',161],['0.00',185]].map(([s, y]) => (
          <text key={s} x="1718" y={Number(y) + 4}>{s}</text>
        ))}
      </g>
      <g fontSize="12" fontWeight="bold" fill="#b8b8b8" textAnchor="middle">
        <text x="1747" y="199">2017</text>
        <text x="1800" y="199">2018</text>
        <text x="1853" y="199">2019</text>
      </g>
      <text x="1880" y="94" fontSize="12" textAnchor="end" fill="#8a8a8a">净利润(亿)</text>
    </svg>
  )
}

function RightPanel() {
  const btn = 'h-[21px] border flex items-center justify-center text-[12px] leading-none'
  const sep = 'ml-[4px] w-[206px] border-b border-[#3a3a3a]'
  return (
    <div className="flex-1 flex flex-col text-[14px] relative overflow-hidden">
      <div className="h-[56px] border-b border-[#b00000] pt-[5px] pl-[9px] grid grid-cols-[52px_52px_52px] gap-x-[17px] gap-y-[3px] content-start">
        <span className={`${btn} border-[#ff3030] text-[#ff3030]`}>闪电买</span>
        <span className={`${btn} border-[#00e000] text-[#00e000]`}>闪电卖</span>
        <span className={`${btn} border-[#b0b0b0] text-[#b8b8b8]`}>查委托</span>
        <span className={`${btn} border-[#b0b0b0] text-[#b8b8b8]`}>一键撤</span>
        <span className={`${btn} border-[#b0b0b0] text-[#b8b8b8]`}>用策略</span>
        <span className={`${btn} border-[#b0b0b0] text-[#b8b8b8]`}>设预警</span>
      </div>
      <div className="h-[22px] flex items-center pl-[7px] text-[13.5px] text-[#b0b0b0] whitespace-nowrap">
        <span className="w-[61px] text-[#8c8c8c]">601068</span>
        <span className="w-[34px] text-[#4d94ff]">单季</span>
        <span className="w-[33px]">同季</span>
        <span className="w-[35px]">财报</span>
        <span>更多..</span>
      </div>
      <MiniChart />
      <div className={`${sep} pb-[5px]`}>
        <FinRow a="主营收" v="61.50亿" b="同比%" w="-1.19" />
        <FinRow a="净利润" v="5253万" b="同比%" w="38.21" />
        <FinRow a="非经损" v="1108万" b="销售费" w="2597万" />
        <FinRow a="货币金" v="60.25亿" b="应收款" w="138亿" />
        <FinRow a="未分配" v="42.46亿" b="预付款" w="12.58亿" />
        <FinRow a="现金流" v="-11.89亿" b="应付款" w="--" />
        <FinRow a="非流动" v="80.34亿" b="预收款" w="--" />
        <FinRow a="财务费" v="9516万" b="管理费" w="2.83亿" />
        <FinRow a="商誉" v="--" b="质押率" w="0.00%" />
      </div>
      <div className={`${sep} pb-[2px]`}>
        <FinRow a="PE" supA="TTM" v="67.5" b="PB" supB="MRQ" w="2.52" />
        <FinRow a="PEG" v="-3.29" b="PS" supB="TTM" w="0.64" />
        <FinRow a="毛利率" v="8.09" b="净利率" w="1.57" />
        <FinRow a="ROE" v="0.51%" b="负债率" w="72.61" />
      </div>
      <div className={`${sep} pt-[4px] pb-[2px]`}>
        <FinRow a="20日i" v="21.5%" b="今年来" w="40.1%" />
        <FinRow a="60日" v="-10.7%" b="Beta值" w="1.62" />
        <FinRow a="年最高" v="10.66" b="年最低" w="4.14" />
        <FinRow a="总市值" v="216亿" b="流通值" w="21.60亿" />
      </div>
      <div className={`${sep} pt-[4px] pb-[2px]`}>
        {[['股东', '19-03-31', '19-02-28'], ['户数', '7.09万', '6.66万'], ['较上期', '6.52%', '-7.50%']].map(([a, b, c]) => (
          <div key={a} className="grid grid-cols-[127px_77px] h-[21px] items-center leading-[21px]">
            <div className="flex justify-between"><span className="text-[#7c7c7c]">{a}</span><span className="text-[#b8b8b8]">{b}</span></div>
            <span className="text-right text-[#b8b8b8]">{c}</span>
          </div>
        ))}
      </div>
      <div className={`${sep} pt-[4px] pb-[3px] text-[#b8b8b8] h-[29px] leading-[21px] whitespace-nowrap`}>6月18日召开2018年度股东大会</div>
      <div className={`${sep} pt-[4px] pb-[1px]`}>
        <div className="flex h-[21px] items-center leading-[21px] text-[#b8b8b8] whitespace-nowrap">
          <span className="w-[48px] text-[#7c7c7c]">基金<span className="text-[6px] relative -top-[5px]">四</span></span>
          <span className="w-[48px]">26家</span>
          <span>28.10万股</span>
          <span className="ml-auto">0.1%</span>
        </div>
      </div>
      <div className={`${sep} pt-[4px] pb-[2px]`}>
        <div className="flex h-[21px] items-center leading-[21px] whitespace-nowrap">
          <span className="w-[80px] text-[#7c7c7c]">分红</span>
          <span className="w-[10px] text-[#b8b8b8]">--</span>
          <span className="w-[52px] text-[#7c7c7c]">募资</span>
          <span className="ml-auto text-[#b8b8b8]">10.21亿(1)</span>
        </div>
      </div>
      <div className={`${sep} pt-[4px] pb-[2px]`}>
        <div className="flex h-[21px] items-center leading-[21px] text-[#7c7c7c]"><span className="w-[46px]">日期</span><span>异动类型</span></div>
        <div className="flex h-[21px] items-center leading-[21px] text-[#b8b8b8] whitespace-nowrap"><span className="w-[46px]">05-31</span><span>连续三个交易日内涨幅...</span></div>
      </div>
      <div className={`${sep} pt-[3px] pb-[2px]`}>
        <Info a="公司" v="中铝国际工程股份有限公司" />
        <Info a="控股" v="国务院国有资产监督管理..." />
        <Info a="主营" v="工程设计及咨询、工程及..." />
        <Info a="地位" v="在有色金属领域工程设计..." />
      </div>
      <div className={`${sep} pt-[4px] pb-[1px]`}>
        <div className="flex h-[21px] items-center leading-[21px] pl-[15px] gap-[6.5px] text-[#b8b8b8]">
          <span className="text-[#4d94ff]">预测评级</span><span>主题投资</span><span>选股策略</span>
        </div>
      </div>
      <div className="ml-[4px] w-[206px] pt-[4px] flex h-[25px] items-center leading-[21px] text-[#7c7c7c] whitespace-nowrap">
        <span className="w-[72px]">年份</span><span>预测收益</span><span className="ml-auto">预测PE</span>
      </div>
      {/* little ^ marker below the 质押率 row, scrollbar on the edge */}
      <span className="absolute left-[104px] top-[387px] text-[10px] leading-none text-[#b8b8b8]">∧</span>
      <div className="absolute left-[206px] top-[835px] w-[8px] h-[56px] rounded-[3px] bg-[#2c3436] flex flex-col justify-end items-center gap-[1px] pb-[4px]">
        {[0, 1, 2, 3, 4, 5].map(i => <i key={i} className="block w-[5px] h-[1px] bg-[#40d8a0]" />)}
      </div>
    </div>
  )
}

function Watermark() {
  return (
    <div className="absolute left-[1096px] top-[925px] w-[800px] h-[81px] bg-[#7da8d5] flex items-center pl-[18px]">
      <span className="text-[56px] leading-none font-black text-[#14148c] font-['Noto_Sans_CJK_SC',sans-serif] whitespace-nowrap">公式指标网</span>
      <svg className="block w-[80px] h-[80px] ml-[23px] shrink-0" viewBox="0 0 80 80">
        <defs>
          <path id="ringText" d="M4 45 A36 36 0 0 0 33 76" />
        </defs>
        <g fill="none" strokeWidth="7">
          <path d="M5.8 40 A34.5 34.5 0 0 1 33 7" stroke="#d96454" />
          <path d="M48 7 A34.5 34.5 0 0 1 74.8 40" stroke="#d96454" />
          <path d="M74.8 42 A34.5 34.5 0 0 1 35 75" stroke="#ebc83c" />
        </g>
        <path d="M33 3 H48 V17 H57 V36 H48 V42 H57 V59 H48 L50 78 H35 V62 L31 70 H26 L32 59 H25 V42 H33 V36 H25 V17 H33 Z" fill="#ebc83c" />
        <circle cx="40.5" cy="8.5" r="3" fill="#7da8d5" />
        <path d="M30 30 H39 M42 30 H51 M30 50 H52 M30 36 L30 36 M40 42 V58 M38 60 L42 72" stroke="#7da8d5" strokeWidth="2" fill="none" />
        <text fontSize="8" fontWeight="bold" fill="#fff" fontFamily="Liberation Sans"><textPath href="#ringText">www.9m8.cn</textPath></text>
      </svg>
      <span className="ml-[28px] text-[56px] leading-none font-bold tracking-[-5px] text-white font-['DejaVu_Serif',serif] whitespace-nowrap">www.9m8.cn</span>
    </div>
  )
}

// two red arrows drawn over all panes, cut by the black band in the middle pane
function Arrows() {
  const seg = (x1: number, y1: number, x2: number, y2: number, k: string) => (
    <line key={k} x1={x1} y1={y1} x2={x2} y2={y2} stroke="#e5101f" strokeWidth="3" />
  )
  return (
    <svg className="absolute left-0 top-0 w-[1896px] h-[1004px] pointer-events-none" viewBox="1 2 1896 1004">
      {seg(587, 288, 586.5, 458, 'a')}
      {seg(582.5, 551, 576, 925, 'b')}
      <polygon points="587,277 578,292 597,292" fill="#e5101f" />
      {seg(1297.7, 262, 1299, 458, 'c')}
      {seg(1300.8, 551, 1304.5, 925, 'd')}
      <polygon points="1297.7,248 1289,267 1307,267" fill="#e5101f" />
      <rect x="1455" y="458" width="1" height="93" fill="#000" />
    </svg>
  )
}

export default function App() {
  return (
    <div className="relative w-[1897px] h-[1008px] flex bg-black overflow-hidden border-t-2 border-l border-b-2 border-[#b4b4b4] font-['Liberation_Sans','Noto_Sans_CJK_SC',sans-serif]">
      <LeftColumn />
      <QuotePanel />
      <RightPanel />
      <Arrows />
      <Watermark />
    </div>
  )
}
